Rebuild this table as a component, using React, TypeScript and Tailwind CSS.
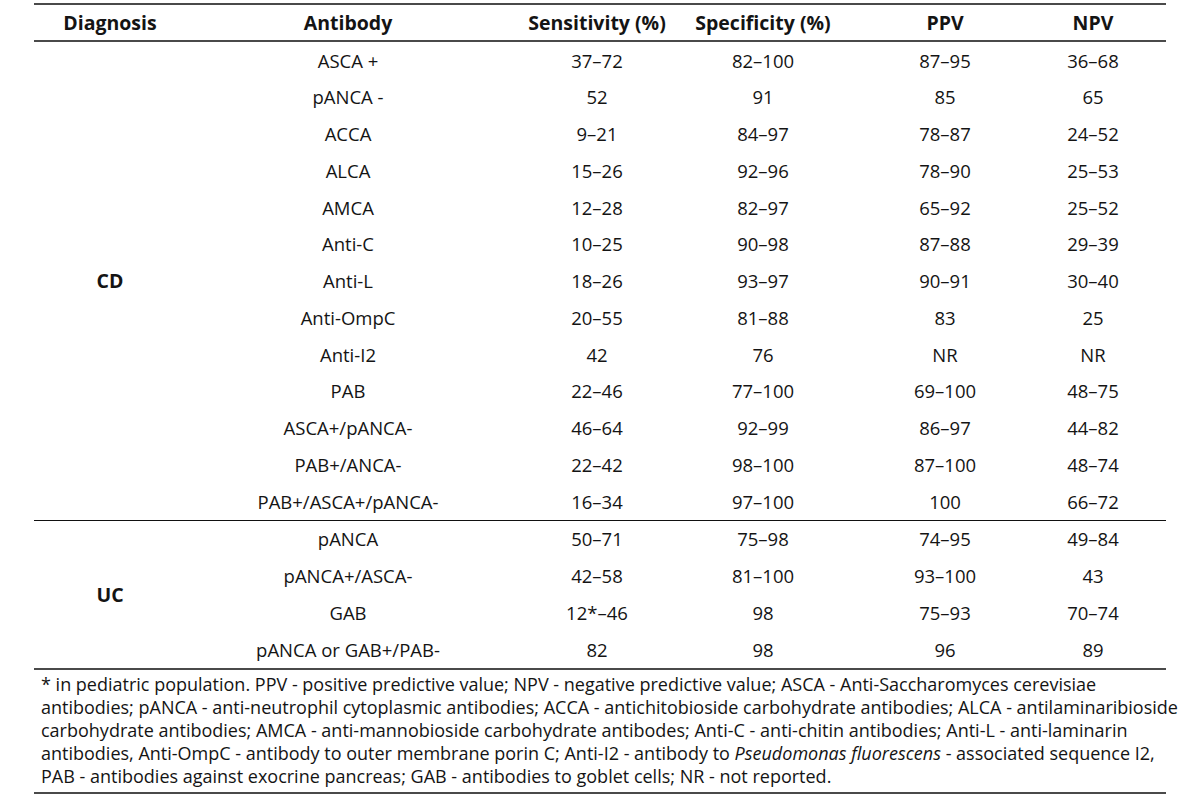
const HEADERS = ['Diagnosis', 'Antibody', 'Sensitivity (%)', 'Specificity (%)', 'PPV', 'NPV'];

const CD_ROWS = [
  ['ASCA +', '37–72', '82–100', '87–95', '36–68'],
  ['pANCA -', '52', '91', '85', '65'],
  ['ACCA', '9–21', '84–97', '78–87', '24–52'],
  ['ALCA', '15–26', '92–96', '78–90', '25–53'],
  ['AMCA', '12–28', '82–97', '65–92', '25–52'],
  ['Anti-C', '10–25', '90–98', '87–88', '29–39'],
  ['Anti-L', '18–26', '93–97', '90–91', '30–40'],
  ['Anti-OmpC', '20–55', '81–88', '83', '25'],
  ['Anti-I2', '42', '76', 'NR', 'NR'],
  ['PAB', '22–46', '77–100', '69–100', '48–75'],
  ['ASCA+/pANCA-', '46–64', '92–99', '86–97', '44–82'],
  ['PAB+/ANCA-', '22–42', '98–100', '87–100', '48–74'],
  ['PAB+/ASCA+/pANCA-', '16–34', '97–100', '100', '66–72'],
];

const UC_ROWS = [
  ['pANCA', '50–71', '75–98', '74–95', '49–84'],
  ['pANCA+/ASCA-', '42–58', '81–100', '93–100', '43'],
  ['GAB', '12*–46', '98', '75–93', '70–74'],
  ['pANCA or GAB+/PAB-', '82', '98', '96', '89'],
];

const GRID = 'grid grid-cols-[152px_324px_174px_158px_206px_90px_1fr]';

function Group({ label, rows }: { label: string; rows: string[][] }) {
  return (
    <div className={GRID}>
      <div
        className="flex items-center justify-center font-bold text-[19.5px]"
        style={{ gridRow: `1 / span ${rows.length}` }}
      >
        {label}
      </div>
      {rows.map((row, i) =>
        row.map((cell, j) => (
          <div
            key={`${i}-${j}`}
            className="h-[36.77px] flex items-center justify-center"
            style={{ gridRow: i + 1, gridColumn: j + 2 }}
          >
            {cell}
          </div>
        ))
      )}
    </div>
  );
}

export default function App() {
  return (
    <div className="w-[1200px] h-[805px] bg-white text-[#141414] font-['Open_Sans',sans-serif] text-[18.5px]">
      <div className="ml-[34px] w-[1132px] pt-[3px]">
        {/* Header */}
        <div className={`${GRID} border-t-2 border-b-2 border-[#4a4a4a] h-[39px] font-bold text-[19.5px]`}>
          {HEADERS.map((h) => (
            <div key={h} className="flex items-center justify-center">
              {h}
            </div>
          ))}
        </div>

        <Group label="CD" rows={CD_ROWS} />
        <div className="border-t-[1.5px] border-[#111]" />
        <Group label="UC" rows={UC_ROWS} />

        {/* Footnote */}
        <div className="border-t-2 border-b-2 border-[#4a4a4a] pl-[7px] pt-[3px] pb-[4px] text-[18px] leading-[23px] whitespace-nowrap">
          * in pediatric population. PPV - positive predictive value; NPV - negative predictive value; ASCA - Anti-Saccharomyces cerevisiae
          <br />
          antibodies; pANCA - anti-neutrophil cytoplasmic antibodies; ACCA - antichitobioside carbohydrate antibodies; ALCA - antilaminaribioside
          <br />
          carbohydrate antibodies; AMCA - anti-mannobioside carbohydrate antibodes; Anti-C - anti-chitin antibodies; Anti-L - anti-laminarin
          <br />
          antibodies, Anti-OmpC - antibody to outer membrane porin C; Anti-I2 - antibody to <i>Pseudomonas fluorescens</i> - associated sequence I2,
          <br />
          PAB - antibodies against exocrine pancreas; GAB - antibodies to goblet cells; NR - not reported.
        </div>
      </div>
    </div>
  );
}
